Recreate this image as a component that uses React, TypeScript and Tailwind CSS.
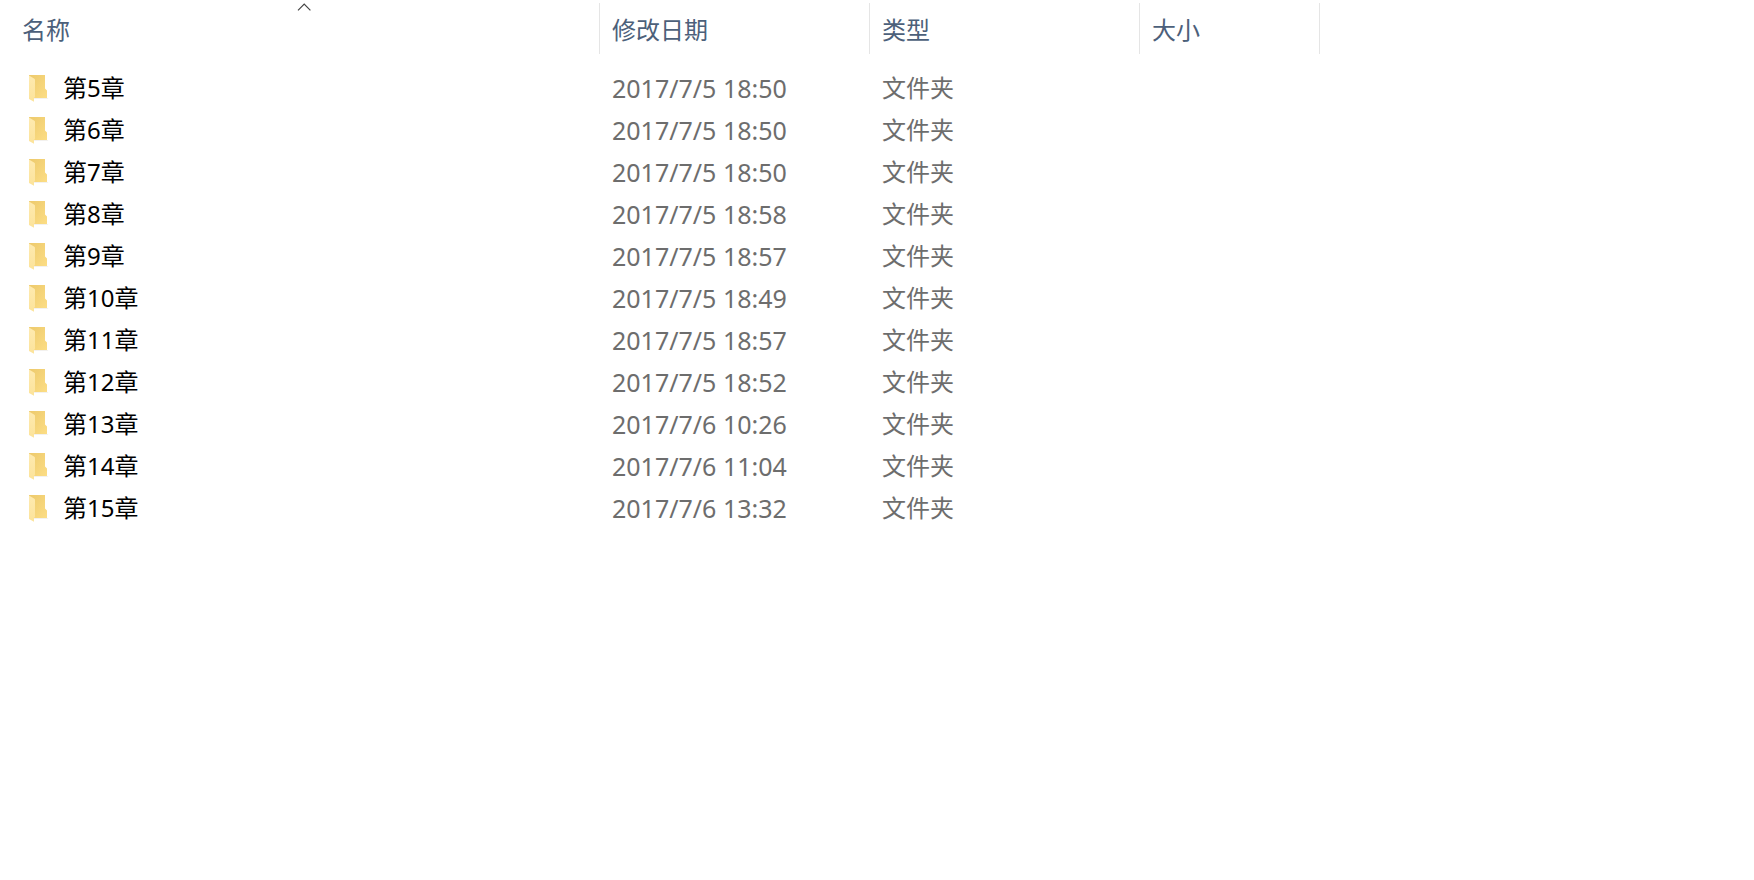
/**
 * 文件夹列表（详细信息视图）
 *
 * 列：名称 / 修改日期 / 类型 / 大小，点击表头切换升序、降序。
 */
import { useMemo, useState } from "react";

interface FolderItem {
  name: string;
  chapter: number;
  modified: string;
  type: string;
  size: string;
}

type ColumnKey = "name" | "modified" | "type" | "size";

const COLUMNS: { key: ColumnKey; label: string; width: string }[] = [
  { key: "name", label: "名称", width: "w-[590px]" },
  { key: "modified", label: "修改日期", width: "w-[270px]" },
  { key: "type", label: "类型", width: "w-[270px]" },
  { key: "size", label: "大小", width: "w-[180px]" },
];

const MODIFIED: [number, string][] = [
  [5, "2017/7/5 18:50"],
  [6, "2017/7/5 18:50"],
  [7, "2017/7/5 18:50"],
  [8, "2017/7/5 18:58"],
  [9, "2017/7/5 18:57"],
  [10, "2017/7/5 18:49"],
  [11, "2017/7/5 18:57"],
  [12, "2017/7/5 18:52"],
  [13, "2017/7/6 10:26"],
  [14, "2017/7/6 11:04"],
  [15, "2017/7/6 13:32"],
];

const FOLDERS: FolderItem[] = MODIFIED.map(([chapter, modified]) => ({
  name: `第${chapter}章`,
  chapter,
  modified,
  type: "文件夹",
  size: "",
}));

function FolderIcon() {
  return (
    <svg className="h-[26px] w-5 shrink-0 overflow-visible" viewBox="0 0 20 26" aria-hidden="true">
      <defs>
        <linearGradient id="folder-back" x1="0" y1="0" x2="1" y2="1">
          <stop offset="0" stopColor="#edca6c" />
          <stop offset="1" stopColor="#fcdd85" />
        </linearGradient>
        <linearGradient id="folder-flap" x1="0" y1="0" x2="0" y2="1">
          <stop offset="0" stopColor="#feeab0" />
          <stop offset="1" stopColor="#fce39a" />
        </linearGradient>
      </defs>
      <path d="M5 23h14.5l-1 .8H5z" fill="#efede8" />
      <path d="M0 0h16v13.5l2 2V23H5L0 18z" fill="url(#folder-back)" />
      <path d="M0 .6l5.4 3.2q.6.4.6 1V22l-1 1V26.8L0 24z" fill="url(#folder-flap)" />
    </svg>
  );
}

export default function App() {
  const [sortKey, setSortKey] = useState<ColumnKey>("name");
  const [asc, setAsc] = useState(true);

  const rows = useMemo(() => {
    const sorted = [...FOLDERS].sort((a, b) => {
      if (sortKey === "name") return a.chapter - b.chapter;
      return a[sortKey].localeCompare(b[sortKey]);
    });
    return asc ? sorted : sorted.reverse();
  }, [sortKey, asc]);

  const handleSort = (key: ColumnKey) => {
    setAsc(key === sortKey ? !asc : true);
    setSortKey(key);
  };

  return (
    <main className="min-h-screen bg-white pl-[10px] font-['Noto_Sans','Noto_Sans_CJK_SC',sans-serif] text-[24px] leading-[42px] text-[#6d6d6d]">
      <table className="w-full table-fixed border-collapse text-left">
        <thead>
          <tr>
            {COLUMNS.map((col) => (
              <th
                key={col.key}
                scope="col"
                aria-sort={col.key === sortKey ? (asc ? "ascending" : "descending") : "none"}
                className={`${col.width} pt-[3px] pb-[13px] font-normal`}
              >
                <button
                  type="button"
                  onClick={() => handleSort(col.key)}
                  className="relative flex h-[51px] w-full items-center border-r border-[#e5e5e5] px-3 pt-[2px] text-[#4c607a]"
                >
                  {col.label}
                  {col.key === sortKey && (
                    <svg
                      className={`absolute top-0 left-1/2 h-2 w-4 -translate-x-1/2 ${asc ? "" : "rotate-180"}`}
                      viewBox="0 0 16 8"
                      fill="none"
                      stroke="#444"
                      strokeWidth="1.2"
                      aria-hidden="true"
                    >
                      <path d="M1 7.4L7.2 1.2l6.2 6.2" />
                    </svg>
                  )}
                </button>
              </th>
            ))}
            {/* 右侧留白 */}
            <td />
          </tr>
        </thead>
        <tbody>
          {rows.map((row) => (
            <tr key={row.chapter} className="hover:bg-[#e5f3ff]">
              <td className="p-0">
                <div className="flex h-[42px] items-center gap-[14px] pl-[19px] text-black">
                  <FolderIcon />
                  {row.name}
                </div>
              </td>
              <td className="px-3 py-0 text-[25px]">{row.modified}</td>
              <td className="px-3 py-0">{row.type}</td>
              <td className="px-3 py-0">{row.size}</td>
              <td />
            </tr>
          ))}
        </tbody>
      </table>
    </main>
  );
}
